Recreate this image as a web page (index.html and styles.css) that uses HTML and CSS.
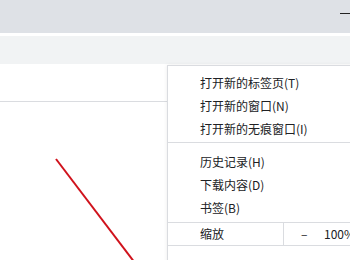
FILE: index.html
```html
<!DOCTYPE html>
<html lang="zh-CN">

<head>
    <meta charset="UTF-8">
    <meta name="viewport" content="width=device-width, initial-scale=1.0">
    <title>菜单</title>
    <link rel="stylesheet" href="styles.css">
</head>

<body>
    <div class="titlebar">
        <span class="min-btn"></span>
    </div>
    <div class="toolbar"></div>
    <div class="page">
        <div class="page-head"></div>
    </div>

    <!-- annotation arrow drawn on top of the page -->
    <svg class="mark" width="350" height="260" viewBox="0 0 350 260">
        <line x1="56" y1="159" x2="135" y2="263" stroke="#d0121c" stroke-width="2" />
    </svg>

    <div class="menu">
        <div class="group first">
            <div class="item">打开新的标签页(T)</div>
            <div class="item">打开新的窗口(N)</div>
            <div class="item">打开新的无痕窗口(I)</div>
        </div>
        <div class="group second">
            <div class="item">历史记录(H)</div>
            <div class="item">下载内容(D)</div>
            <div class="item">书签(B)</div>
        </div>
        <div class="zoom-row">
            <div class="zoom-label">缩放</div>
            <div class="zoom-ctrl">
                <span class="minus">–</span>
                <span class="value">100%</span>
            </div>
        </div>
        <div class="group">
            <div class="item"></div>
        </div>
    </div>
</body>

</html>
```

FILE: styles.css
```css
body {
    margin: 0;
    width: 350px;
    height: 260px;
    overflow: hidden;
    position: relative;
    background-color: #fff;
    font-family: "Noto Sans CJK SC", "Liberation Sans", sans-serif;
    color: #202124;
}

.titlebar {
    height: 33px;
    background-color: #dee1e6;
    display: flex;
    justify-content: flex-end;
    align-items: flex-start;
    margin-bottom: 3px;
}

.min-btn {
    width: 10px;
    height: 1px;
    margin-top: 13px;
    background-color: #222;
}

.toolbar {
    height: 28px;
    background-color: #f1f3f4;
}

.page-head {
    height: 37px;
    border-bottom: 1px solid #dadce0;
}

.mark {
    position: absolute;
    left: 0;
    top: 0;
}

.menu {
    position: absolute;
    left: 167px;
    top: 65px;
    width: 220px;
    background-color: #fff;
    border: 1px solid #dadce0;
    box-shadow: 0 0 4px rgba(0, 0, 0, 0.08);
    font-size: 12px;
}

.group {
    border-bottom: 1px solid #dadce0;
}

.group.first {
    padding: 5px 0 2px;
}

.group.second {
    padding: 7px 0 3px;
}

.item {
    height: 23px;
    line-height: 23px;
    padding-left: 32px;
    white-space: nowrap;
}

.zoom-row {
    display: flex;
    height: 22px;
    line-height: 22px;
    border-bottom: 1px solid #dadce0;
}

.zoom-label {
    width: 83px;
    padding-left: 32px;
    border-right: 1px solid #dadce0;
}

.zoom-ctrl {
    display: flex;
    white-space: nowrap;
}

.minus {
    margin-left: 17px;
    width: 22px;
}

.value {
    margin-left: 1px;
}
```
